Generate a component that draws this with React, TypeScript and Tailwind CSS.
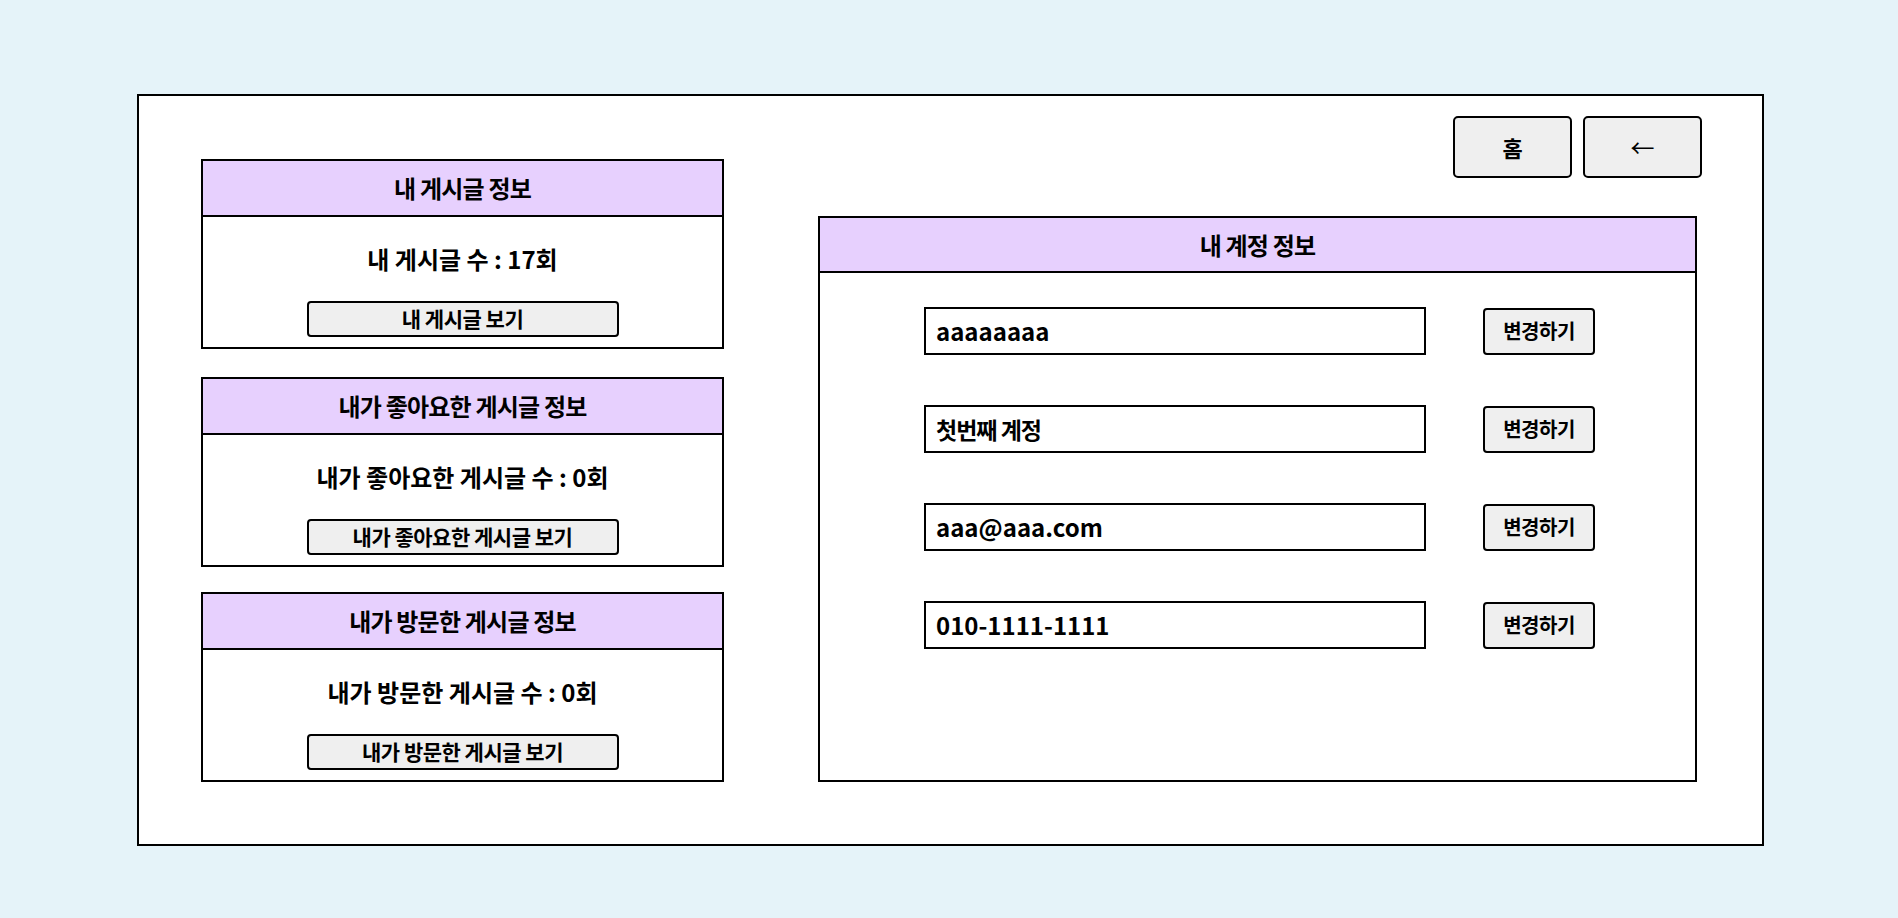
import React from "react";

const font = { fontFamily: '"Noto Sans CJK KR", "Noto Sans", sans-serif' };

function InfoCard({ title, count, button, className }: { title: string; count: string; button: string; className?: string }) {
  return (
    <div className={"flex h-[190px] w-[523px] flex-col border-2 border-black bg-white " + (className ?? "")}>
      <div className="flex h-[56px] items-center justify-center border-b-2 border-black bg-[#e7d0fe] text-[24px] font-bold tracking-[-0.8px] text-black">
        {title}
      </div>
      <div className="flex flex-1 flex-col items-center">
        <div className="mt-[26px] text-[24px] leading-[32px] font-bold text-black">{count}</div>
        <button className="mt-[26px] flex h-[36px] w-[312px] items-center justify-center rounded-[4px] border-2 border-black bg-[#efefef] text-[21px] font-bold tracking-[-0.5px] text-black">
          {button}
        </button>
      </div>
    </div>
  );
}

function Row({ value, korean }: { value: string; korean?: boolean }) {
  return (
    <div className="flex items-center">
      <div
        className={
          "flex h-[48px] w-[502px] items-center border-2 border-black bg-white pl-[10px] font-bold text-black " +
          (korean ? "text-[23px] tracking-[-1px]" : "text-[24px]")
        }
      >
        {value}
      </div>
      <button className="ml-[57px] flex h-[47px] w-[112px] items-center justify-center rounded-[4px] border-2 border-black bg-[#efefef] text-[20px] font-bold tracking-[-0.5px] text-black">
        변경하기
      </button>
    </div>
  );
}

export default function App() {
  return (
    <div className="min-h-[918px] w-full bg-[#e5f3f9] pt-[94px]" style={font}>
      <div className="ml-[137px] flex h-[752px] w-[1627px] border-2 border-black bg-white">
        <div className="ml-[62px] mt-[63px] flex flex-col">
          <InfoCard title="내 게시글 정보" count="내 게시글 수 : 17회" button="내 게시글 보기" />
          <InfoCard className="mt-[28px]" title="내가 좋아요한 게시글 정보" count="내가 좋아요한 게시글 수 : 0회" button="내가 좋아요한 게시글 보기" />
          <InfoCard className="mt-[25px]" title="내가 방문한 게시글 정보" count="내가 방문한 게시글 수 : 0회" button="내가 방문한 게시글 보기" />
        </div>
        <div className="ml-[94px] mt-[20px] flex w-[884px] flex-col">
          <div className="flex justify-end gap-[11px]">
            <button className="flex h-[62px] w-[119px] items-center justify-center rounded-[5px] border-2 border-black bg-[#efefef] text-[22px] font-bold text-black">
              홈
            </button>
            <button className="flex h-[62px] w-[119px] items-center justify-center rounded-[5px] border-2 border-black bg-[#efefef] text-[24px] font-normal text-black">
              ←
            </button>
          </div>
          <div className="mt-[38px] flex h-[566px] w-[879px] flex-col border-2 border-black bg-white">
            <div className="flex h-[55px] items-center justify-center border-b-2 border-black bg-[#e7d0fe] text-[24px] font-bold tracking-[-0.8px] text-black">
              내 계정 정보
            </div>
            <div className="ml-[104px] mt-[34px] flex flex-col gap-[50px]">
              <Row value="aaaaaaaa" />
              <Row value="첫번째 계정" korean />
              <Row value="aaa@aaa.com" />
              <Row value="010-1111-1111" />
            </div>
          </div>
        </div>
      </div>
    </div>
  );
}
